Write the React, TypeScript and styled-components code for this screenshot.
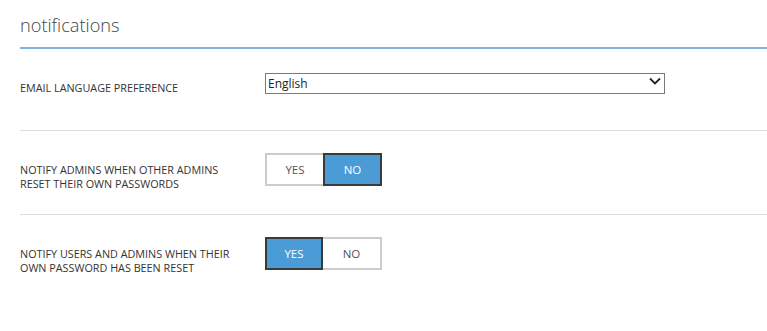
import React, { useState } from "react";
import styled, { createGlobalStyle } from "styled-components";

const Global = createGlobalStyle`
  html, body { margin: 0; padding: 0; background: #fff; }
  body { font-family: "Open Sans", "Noto Sans", sans-serif; color: #333; }
  * { box-sizing: border-box; }
`;

const Page = styled.div`
  padding-left: 20px;
  width: 767px;
`;

const Header = styled.div`
  height: 49px;
  border-bottom: 2px solid #80b3e1;
  padding-top: 13px;
`;

const Title = styled.h1`
  margin: 0;
  font-size: 18.2px;
  font-weight: 300;
  line-height: 24px;
  color: #444;
  letter-spacing: 0;
`;

const Row = styled.div<{ $first?: boolean }>`
  display: grid;
  grid-template-columns: 245px 1fr;
  align-items: start;
  padding-top: 22px;
  height: ${(p) => (p.$first ? "81px" : "84px")};
  border-top: ${(p) => (p.$first ? "none" : "1px solid #dcdcdc")};
`;

const Label = styled.div`
  margin-top: 10px;
  font-size: 10.8px;
  line-height: 14px;
  text-transform: uppercase;
  color: #333;
  letter-spacing: 0;
`;

const SelectWrap = styled.div`
  position: relative;
  width: 400px;
  height: 21px;
`;

const Select = styled.select`
  appearance: none;
  -webkit-appearance: none;
  width: 100%;
  height: 100%;
  border: 1px solid #7a7a7a;
  border-radius: 0;
  background: #fff;
  padding: 0 0 0 2px;
  font-family: "Open Sans", "Noto Sans", sans-serif;
  font-size: 12px;
  color: #222;
  outline: none;
`;

const Chevron = styled.svg`
  position: absolute;
  right: 4px;
  top: 6px;
  pointer-events: none;
`;

const Toggle = styled.div`
  display: flex;
  height: 33px;
`;

const ToggleButton = styled.button<{ $active: boolean; $side: "left" | "right" }>`
  width: ${(p) => (p.$side === "left" ? "58px" : "59px")};
  height: 33px;
  margin: 0;
  padding: 0;
  font-family: "Open Sans", "Noto Sans", sans-serif;
  font-size: 11.5px;
  text-transform: uppercase;
  cursor: pointer;
  background: ${(p) => (p.$active ? "#4a9bd6" : "#fff")};
  color: ${(p) => (p.$active ? "#fff" : "#555")};
  border: 2px solid ${(p) => (p.$active ? "#3a3a3a" : "#cccccc")};
  ${(p) =>
    !p.$active && p.$side === "left" ? "border-right: none;" : ""}
  ${(p) =>
    !p.$active && p.$side === "right" ? "border-left: none;" : ""}
`;

function YesNo({ initial }: { initial: boolean }) {
  const [value, setValue] = useState(initial);
  return (
    <Toggle>
      <ToggleButton $side="left" $active={value} onClick={() => setValue(true)}>
        Yes
      </ToggleButton>
      <ToggleButton $side="right" $active={!value} onClick={() => setValue(false)}>
        No
      </ToggleButton>
    </Toggle>
  );
}

export default function App() {
  return (
    <>
      <Global />
      <Page>
        <Header>
          <Title>notifications</Title>
        </Header>
        <Row $first>
          <Label>Email language preference</Label>
          <SelectWrap>
            <Select defaultValue="en">
              <option value="en">English</option>
            </Select>
            <Chevron width="12" height="8" viewBox="0 0 12 8">
              <polyline points="1,1.5 6,6.5 11,1.5" fill="none" stroke="#222" strokeWidth="1.8" />
            </Chevron>
          </SelectWrap>
        </Row>
        <Row>
          <Label>
            Notify admins when other admins
            <br />
            reset their own passwords
          </Label>
          <YesNo initial={false} />
        </Row>
        <Row>
          <Label>
            Notify users and admins when their
            <br />
            own password has been reset
          </Label>
          <YesNo initial={true} />
        </Row>
      </Page>
    </>
  );
}
